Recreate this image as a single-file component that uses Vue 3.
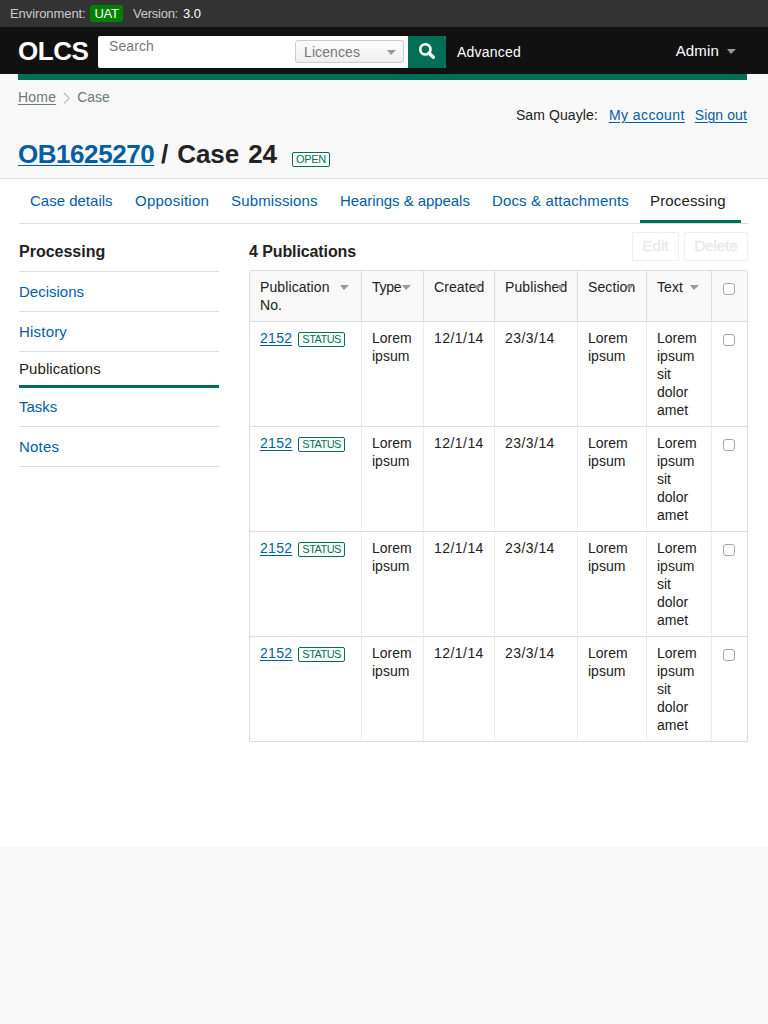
<script setup>
import { ref } from 'vue'

const tabs = ['Case details', 'Opposition', 'Submissions', 'Hearings & appeals', 'Docs & attachments', 'Processing']
const sections = ['Decisions', 'History', 'Publications', 'Tasks', 'Notes']
const columns = ['Publication No.', 'Type', 'Created', 'Published', 'Section', 'Text']
const rows = ref([1, 2, 3, 4].map((id) => ({
  id,
  number: '2152',
  status: 'STATUS',
  type: 'Lorem ipsum',
  created: '12/1/14',
  published: '23/3/14',
  section: 'Lorem ipsum',
  text: 'Lorem ipsum sit dolor amet',
})))
</script>

<template>
  <div class="page">
    <div class="env">
      <span class="env-name">Environment:</span>
      <span class="env-badge">UAT</span>
      <span class="version">Version:</span>
      <span class="version-no">3.0</span>
    </div>

    <header class="header">
      <a class="logo">OLCS</a>
      <form class="search">
        <span class="placeholder">Search</span>
        <span class="select">Licences<i class="arrow"></i></span>
        <button type="button" class="go" aria-label="Search">
          <svg width="16" height="16" viewBox="0 0 16 16">
            <circle cx="6.4" cy="6.4" r="5.1" fill="none" stroke="#fff" stroke-width="2.6" />
            <path d="M10.2 10.2L14.3 14.3" stroke="#fff" stroke-width="3.4" stroke-linecap="round" />
          </svg>
        </button>
      </form>
      <a class="advanced">Advanced</a>
      <a class="admin">Admin<i class="arrow"></i></a>
    </header>

    <section class="intro">
      <div class="rule"></div>
      <div class="crumbs">
        <a class="home">Home</a>
        <svg width="8" height="12" viewBox="0 0 8 12"><path d="M1 1L6.2 6.2L1 11.4" fill="none" stroke="#b5b8ba" stroke-width="1.2" /></svg>
        <span>Case</span>
      </div>
      <div class="user">
        <span>Sam Quayle:</span>
        <a class="account">My account</a>
        <a class="signout">Sign out</a>
      </div>
      <h1 class="title">
        <a>OB1625270</a><span class="case">/ Case 24</span><span class="tag open">OPEN</span>
      </h1>
    </section>

    <main class="main">
      <nav class="tabs">
        <a v-for="t in tabs" :key="t" :class="{ active: t === 'Processing' }">{{ t }}</a>
      </nav>
      <div class="body">
        <aside class="side">
          <h2>Processing</h2>
          <a v-for="s in sections" :key="s" :class="{ active: s === 'Publications' }">{{ s }}</a>
        </aside>
        <div class="content">
          <div class="toolbar">
            <h2>4 Publications</h2>
            <div class="actions">
              <span class="btn edit">Edit</span>
              <span class="btn delete">Delete</span>
            </div>
          </div>
          <table>
            <colgroup>
              <col class="c1" /><col class="c2" /><col class="c3" /><col class="c4" /><col class="c5" /><col class="c6" /><col class="c7" />
            </colgroup>
            <thead>
              <tr>
                <th v-for="c in columns" :key="c"><div class="th">{{ c }}<i class="arrow sort"></i></div></th>
                <th><input type="checkbox" /></th>
              </tr>
            </thead>
            <tbody>
              <tr v-for="r in rows" :key="r.id">
                <td class="nowrap"><a class="number">{{ r.number }}</a><span class="tag status">{{ r.status }}</span></td>
                <td>{{ r.type }}</td>
                <td class="date">{{ r.created }}</td>
                <td class="date">{{ r.published }}</td>
                <td>{{ r.section }}</td>
                <td>{{ r.text }}</td>
                <td><input type="checkbox" /></td>
              </tr>
            </tbody>
          </table>
        </div>
      </div>
    </main>
  </div>
</template>

<style>
body {
  background: #f8f8f8;
}
</style>

<style scoped>
.page {
  width: 768px;
  height: 1024px;
  overflow: hidden;
  background: #f8f8f8;
  color: #222;
  font-family: "Liberation Sans", Arial, sans-serif;
  font-size: 14px;
}
.page * {
  box-sizing: border-box;
}
h1, h2 {
  margin: 0;
}
.arrow {
  display: block;
  width: 0;
  height: 0;
  border: 4.5px solid transparent;
  border-width: 5px 5px 0 4px;
  border-top-color: #999;
}

.env {
  display: flex;
  align-items: center;
  height: 27px;
  padding-left: 10px;
  background: #333;
  color: #ccc;
  font-size: 13px;
}
.env-name {
  width: 80px;
  letter-spacing: -0.08px;
}
.env-badge {
  width: 33px;
  height: 17px;
  border-radius: 2px;
  background: #008000;
  color: #fff;
  line-height: 17px;
  text-align: center;
  letter-spacing: -0.3px;
}
.version {
  width: 50px;
  margin-left: 10px;
  letter-spacing: -0.25px;
}
.version-no {
  color: #fff;
}

.header {
  display: flex;
  align-items: center;
  height: 47px;
  padding: 0 32px 0 18px;
  background: #111;
  color: #fff;
}
.logo {
  width: 80px;
  padding-top: 1px;
  font-size: 26px;
  font-weight: bold;
  letter-spacing: -0.45px;
}
.search {
  display: flex;
  width: 348px;
  height: 32px;
  margin-top: 3px;
  border-radius: 2px;
  overflow: hidden;
  background: #fff;
  color: #777;
}
.placeholder {
  width: 197px;
  padding: 2px 0 0 11px;
  line-height: 17px;
  letter-spacing: 0.1px;
}
.select {
  display: flex;
  align-items: center;
  justify-content: space-between;
  width: 109px;
  height: 23px;
  margin-top: 4px;
  padding: 0 7px 0 8px;
  border: 1px solid #ccc;
  border-radius: 3px;
  background: linear-gradient(#fcfcfc, #eee);
  letter-spacing: 0.1px;
}
.select .arrow {
  margin-top: 2px;
}
.go {
  display: flex;
  align-items: flex-start;
  width: 38px;
  height: 32px;
  margin: 0 0 0 4px;
  padding: 7px 0 0 11px;
  border: 0;
  background: #006f56;
}
.go svg {
  display: block;
}
.advanced {
  margin: 3px 0 0 11px;
  letter-spacing: 0.2px;
}
.admin {
  display: flex;
  align-items: center;
  gap: 8px;
  margin-left: auto;
  font-size: 15px;
  letter-spacing: 0.15px;
}
.admin .arrow {
  margin-top: 2px;
}

.intro {
  height: 105px;
  padding: 0 21px 0 18px;
  border-bottom: 1px solid #ddd;
}
.rule {
  height: 6px;
  background: #006f56;
}
.crumbs {
  display: flex;
  align-items: center;
  height: 18px;
  margin-top: 8px;
  color: #6f777b;
}
.crumbs svg {
  margin: 2px 6px 0 7px;
}
.home, .user a, .title a, .number {
  text-decoration: underline;
  text-decoration-thickness: 1px;
  text-underline-offset: 2px;
}
.home {
  letter-spacing: 0.2px;
}
.user {
  display: flex;
  justify-content: flex-end;
  height: 18px;
  line-height: 18px;
  letter-spacing: 0.1px;
}
.user a {
  color: #005ea5;
}
.user .account {
  margin: 0 10px 0 11px;
  letter-spacing: 0.43px;
}
.title {
  display: flex;
  height: 30px;
  margin-top: 15px;
  font-size: 26px;
  line-height: 30px;
}
.title a {
  width: 143px;
  color: #005ea5;
  letter-spacing: -0.45px;
  white-space: nowrap;
}
.case {
  width: 131px;
  white-space: nowrap;
  word-spacing: 2px;
  letter-spacing: -0.1px;
}
.tag {
  display: inline-block;
  height: 15px;
  padding: 0 3px;
  border: 1px solid #006f56;
  border-radius: 2px;
  background: #fff;
  color: #006f56;
  font-size: 11px;
  font-weight: normal;
  line-height: 13px;
}
.open {
  width: 38px;
  margin-top: 13px;
  letter-spacing: -0.3px;
}

.main {
  height: 668px;
  padding: 0 20px 0 19px;
  background: #fff;
}
.tabs {
  display: grid;
  grid-template-columns: 105px 96px 109px 152px 148px 101px;
  height: 45px;
  padding-left: 11px;
  border-bottom: 1px solid #ddd;
  color: #005ea5;
  font-size: 15px;
  line-height: 44px;
  white-space: nowrap;
}
.tabs a:nth-child(2) {
  letter-spacing: 0.24px;
}
.tabs a:nth-child(3), .tabs a:nth-child(5) {
  letter-spacing: 0.15px;
}
.tabs a:nth-child(4) {
  letter-spacing: -0.06px;
}
.tabs .active {
  height: 44px;
  padding-left: 10px;
  border-bottom: 3px solid #006f56;
  color: #222;
  letter-spacing: 0.15px;
}
.body {
  display: flex;
  gap: 30px;
}
.side {
  width: 200px;
}
h2 {
  font-size: 16px;
}
.side h2 {
  height: 48px;
  padding-top: 8px;
  border-bottom: 1px solid #ddd;
  line-height: 40px;
}
.side a {
  display: block;
  height: 40px;
  border-bottom: 1px solid #ddd;
  color: #005ea5;
  font-size: 15px;
  line-height: 40px;
}
.side .active {
  height: 36px;
  border-bottom: 3px solid #006f56;
  color: #222;
  line-height: 34px;
  letter-spacing: 0.07px;
}
.side a:nth-child(3), .side a:nth-child(6) {
  letter-spacing: 0.2px;
}
.side .active + a {
  height: 39px;
  line-height: 38px;
}
.content {
  width: 499px;
}
.toolbar {
  display: flex;
  justify-content: space-between;
  height: 46px;
  padding-top: 8px;
}
.toolbar h2 {
  line-height: 40px;
  letter-spacing: -0.1px;
}
.actions {
  display: flex;
  gap: 5px;
}
.btn {
  height: 29px;
  border: 1px solid #eee;
  border-radius: 2px;
  color: #e9e9e9;
  font-size: 15px;
  line-height: 25px;
  text-align: center;
  -webkit-text-stroke: 0.4px #e9e9e9;
}
.edit {
  width: 47px;
}
.delete {
  width: 64px;
  letter-spacing: -0.1px;
}
table {
  table-layout: fixed;
  width: 499px;
  border: 1px solid #ddd;
  border-radius: 2px 2px 0 0;
  border-spacing: 0;
  font-size: 14px;
  line-height: 18px;
}
.c1 { width: 112px; }
.c2 { width: 62px; }
.c3 { width: 71px; }
.c4 { width: 83px; }
.c5 { width: 69px; }
.c6 { width: 65px; }
.c7 { width: 35px; }
th, td {
  padding: 7px 10px;
  text-align: left;
  vertical-align: top;
}
th {
  height: 51px;
  border-right: 1px solid #ddd;
  border-bottom: 1px solid #ddd;
  background: #f8f8f8;
  font-weight: normal;
}
td {
  height: 105px;
  border-right: 1px dotted #ddd;
  border-bottom: 1px solid #ddd;
}
th:last-child, td:last-child {
  padding-left: 11px;
  padding-right: 0;
  border-right: 0;
}
tbody tr:last-child td {
  height: 104px;
  border-bottom: 0;
}
.th {
  position: relative;
  letter-spacing: 0.1px;
}
th:nth-child(2) .th {
  letter-spacing: -0.3px;
}
.sort {
  position: absolute;
  top: 7px;
  right: 2px;
}
.nowrap {
  padding-right: 0;
  white-space: nowrap;
}
.number {
  color: #005ea5;
  letter-spacing: 0.3px;
}
.status {
  width: 47px;
  margin-left: 6px;
  letter-spacing: -0.55px;
  vertical-align: top;
  margin-top: 3px;
}
.date {
  padding-right: 0;
  letter-spacing: 0.45px;
}
input {
  appearance: none;
  display: block;
  width: 12px;
  height: 12px;
  margin: 5px 0 0;
  border: 1px solid #a6a6a6;
  border-radius: 3px;
  background: #fff;
}
</style>
